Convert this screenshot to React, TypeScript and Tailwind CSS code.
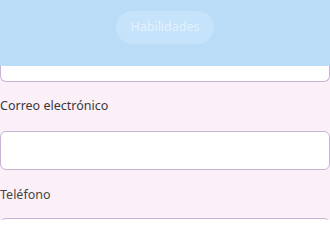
export default function App() {
  return (
    <div className="w-[330px] h-[220px] overflow-hidden bg-[#fcf0f8] font-['Noto_Sans',sans-serif]">
      {/* Header with section pill */}
      <div className="h-[66px] bg-[#badcf7] flex justify-center items-start pt-[11px]">
        <div className="h-[33px] px-[14px] rounded-full bg-[#c5e3fa] flex items-center text-[12.5px] text-[#e4f2fd]">
          Habilidades
        </div>
      </div>

      {/* Bottom of previous input, scrolled under the header */}
      <div className="h-[16px] bg-white border-x border-b border-[#c6b4d6] rounded-b-[6px]" />

      <div className="mt-[14px] text-[12.5px] leading-5 text-[#383838]">Correo electrónico</div>
      <input
        type="email"
        className="mt-[15px] block w-full h-[39px] bg-white border border-[#c6b4d6] rounded-[6px] outline-none"
      />

      <div className="mt-[15px] text-[12.5px] leading-5 text-[#444]">Teléfono</div>
      <input
        type="tel"
        className="mt-[13px] block w-full h-[39px] bg-white border border-[#c6b4d6] rounded-[6px] outline-none"
      />
    </div>
  );
}
